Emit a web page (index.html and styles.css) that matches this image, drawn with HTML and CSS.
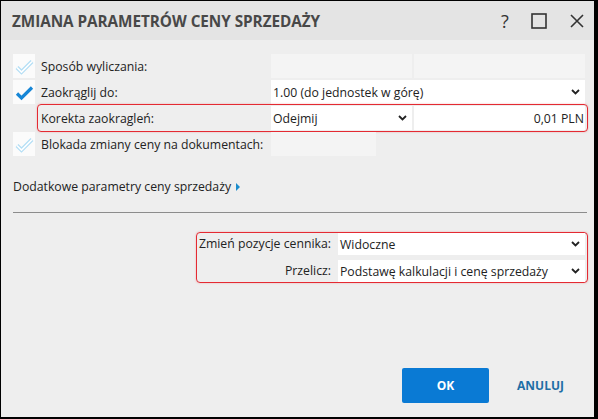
FILE: index.html
```html
<!DOCTYPE html>
<html lang="pl">
<head>
<meta charset="utf-8">
<title>Zmiana parametrów ceny sprzedaży</title>
<link rel="stylesheet" href="styles.css">
</head>
<body>
<div class="dialog">
  <header class="titlebar">
    <h1 class="title">ZMIANA PARAMETRÓW CENY SPRZEDAŻY</h1>
    <div class="tools">
      <span class="tool help">?</span>
      <svg class="tool" width="16" height="16" viewBox="0 0 16 16"><rect x="1" y="1" width="14" height="14" fill="none" stroke="#333" stroke-width="1.6"/></svg>
      <svg class="tool" width="14" height="14" viewBox="0 0 14 14"><path d="M1 1 L13 13 M13 1 L1 13" stroke="#333" stroke-width="1.6" fill="none"/></svg>
    </div>
  </header>

  <main class="content">
    <div class="rows">
      <div class="row">
        <span class="check">
          <svg width="22" height="24" viewBox="0 0 22 24"><path d="M4 13.5 L8.5 18 L19 7.5" fill="none" stroke="#b3def5" stroke-width="4" stroke-linejoin="miter"/><path d="M4 13.5 L8.5 18 L19 7.5" fill="none" stroke="#fff" stroke-width="1.6"/></svg>
        </span>
        <span class="label">Sposób wyliczania:</span>
        <div class="fields">
          <span class="field disabled w141"></span>
          <span class="field disabled grow"></span>
        </div>
      </div>

      <div class="row">
        <span class="check">
          <svg width="22" height="24" viewBox="0 0 22 24"><path d="M4 13.5 L8.5 18 L19 7.5" fill="none" stroke="#1686d6" stroke-width="3.2"/></svg>
        </span>
        <span class="label">Zaokrąglij do:</span>
        <div class="fields">
          <span class="field select grow">1.00 (do jednostek w górę)<svg class="chev" width="9" height="6" viewBox="0 0 9 6"><path d="M1 1 L4.5 4.5 L8 1" fill="none" stroke="#222" stroke-width="1.8"/></svg></span>
        </div>
      </div>

      <div class="row marked">
        <span class="check empty"></span>
        <span class="label">Korekta zaokragleń:</span>
        <div class="fields">
          <span class="field select w141">Odejmij<svg class="chev" width="9" height="6" viewBox="0 0 9 6"><path d="M1 1 L4.5 4.5 L8 1" fill="none" stroke="#222" stroke-width="1.8"/></svg></span>
          <span class="field input grow">0,01 PLN</span>
        </div>
      </div>

      <div class="row">
        <span class="check">
          <svg width="22" height="24" viewBox="0 0 22 24"><path d="M4 13.5 L8.5 18 L19 7.5" fill="none" stroke="#b3def5" stroke-width="4"/><path d="M4 13.5 L8.5 18 L19 7.5" fill="none" stroke="#fff" stroke-width="1.6"/></svg>
        </span>
        <span class="label">Blokada zmiany ceny na dokumentach:</span>
        <div class="fields">
          <span class="field disabled w105"></span>
        </div>
      </div>
    </div>

    <div class="more">Dodatkowe parametry ceny sprzedaży <span class="arrow"></span></div>
    <hr class="sep">

    <div class="group">
      <span class="glabel">Zmień pozycje cennika:</span>
      <span class="field select">Widoczne<svg class="chev" width="9" height="6" viewBox="0 0 9 6"><path d="M1 1 L4.5 4.5 L8 1" fill="none" stroke="#222" stroke-width="1.8"/></svg></span>
      <span class="glabel">Przelicz:</span>
      <span class="field select">Podstawę kalkulacji i cenę sprzedaży<svg class="chev" width="9" height="6" viewBox="0 0 9 6"><path d="M1 1 L4.5 4.5 L8 1" fill="none" stroke="#222" stroke-width="1.8"/></svg></span>
    </div>
  </main>

  <footer class="footer">
    <button class="btn primary">OK</button>
    <button class="btn link">ANULUJ</button>
  </footer>
</div>
</body>
</html>
```

FILE: styles.css
```css
html, body {
  margin: 0;
  padding: 0;
  background: #000;
}
body {
  width: 598px;
  height: 419px;
  overflow: hidden;
}
.dialog {
  margin: 1px 0 0 1px;
  width: 593px;
  height: 416px;
  background: #eeeeee;
  display: flex;
  flex-direction: column;
  font-family: "Open Sans", "Noto Sans", sans-serif;
  font-size: 12.25px;
  color: #222;
}
.titlebar {
  height: 39px;
  background: #e4e4e4;
  display: flex;
  align-items: center;
  padding: 0 10px 0 11px;
  box-sizing: border-box;
}
.title {
  margin: 0;
  font-size: 15.3px;
  font-weight: 700;
  color: #484848;
  letter-spacing: -0.05px;
  flex: 1;
}
.tools {
  display: flex;
  align-items: center;
  gap: 0;
}
.tool.help {
  font-size: 18px;
  color: #333;
  width: 8px;
  margin-right: 22px;
  line-height: 1;
}
.tools svg:nth-child(2) { margin-right: 23px; }

.content {
  padding: 14px 9px 0 12px;
  flex: 1;
}
.rows {
  display: flex;
  flex-direction: column;
  gap: 2px;
}
.row {
  display: flex;
  align-items: center;
  height: 24px;
  position: relative;
}
.check {
  width: 22px;
  height: 24px;
  background: #fbfbfb;
  margin-right: 6px;
  display: flex;
}
.check.empty { background: transparent; }
.label {
  width: 230px;
  white-space: nowrap;
}
.fields {
  flex: 1;
  display: flex;
  gap: 2px;
  height: 24px;
}
.field {
  height: 24px;
  box-sizing: border-box;
  display: flex;
  align-items: center;
  white-space: nowrap;
}
.field.disabled { background: #f4f4f4; }
.field.select, .field.input {
  background: #fff;
  padding: 0 0 0 2px;
}
.field.select .chev { margin-left: auto; margin-right: 5px; }
.field.input { justify-content: flex-end; padding-right: 1px; }
.w141 { width: 141px; }
.w105 { width: 105px; }
.grow { flex: 1; }

.marked::after {
  content: "";
  position: absolute;
  left: 24px;
  right: -3px;
  top: -2px;
  bottom: -2px;
  border: 1px solid #e42a32;
  border-radius: 4px;
  box-shadow: 0 0 2px rgba(228, 42, 50, 0.35);
  pointer-events: none;
}

.more {
  margin-top: 22px;
  line-height: 17px;
  display: flex;
  align-items: center;
}
.arrow {
  display: inline-block;
  width: 0;
  height: 0;
  margin-left: 5px;
  border-top: 4px solid transparent;
  border-bottom: 4px solid transparent;
  border-left: 4px solid #1a8ccc;
}
.sep {
  margin: 17px -2px 0 0;
  border: 0;
  border-top: 1px solid #8c8c8c;
  height: 0;
}

.group {
  margin: 19px -3px 0 auto;
  width: 392px;
  box-sizing: border-box;
  border: 1px solid #e42a32;
  border-radius: 4px;
  box-shadow: 0 0 2px rgba(228, 42, 50, 0.35);
  padding: 0 2px 0 1px;
  display: grid;
  grid-template-columns: 1fr 247px;
  column-gap: 7px;
  row-gap: 5px;
}
.group .field { height: 22px; }
.glabel {
  text-align: right;
  line-height: 22px;
  white-space: nowrap;
}

.footer {
  display: flex;
  justify-content: flex-end;
  gap: 8px;
  padding: 0 10px 14px 0;
}
.btn {
  width: 87px;
  height: 35px;
  border: 0;
  border-radius: 2px;
  font-family: "Open Sans", "Noto Sans", sans-serif;
  font-size: 12px;
  font-weight: 700;
  cursor: pointer;
}
.btn.primary {
  background: #0a7ad4;
  color: #fff;
}
.btn.link {
  background: transparent;
  color: #1e6ea6;
}
```
